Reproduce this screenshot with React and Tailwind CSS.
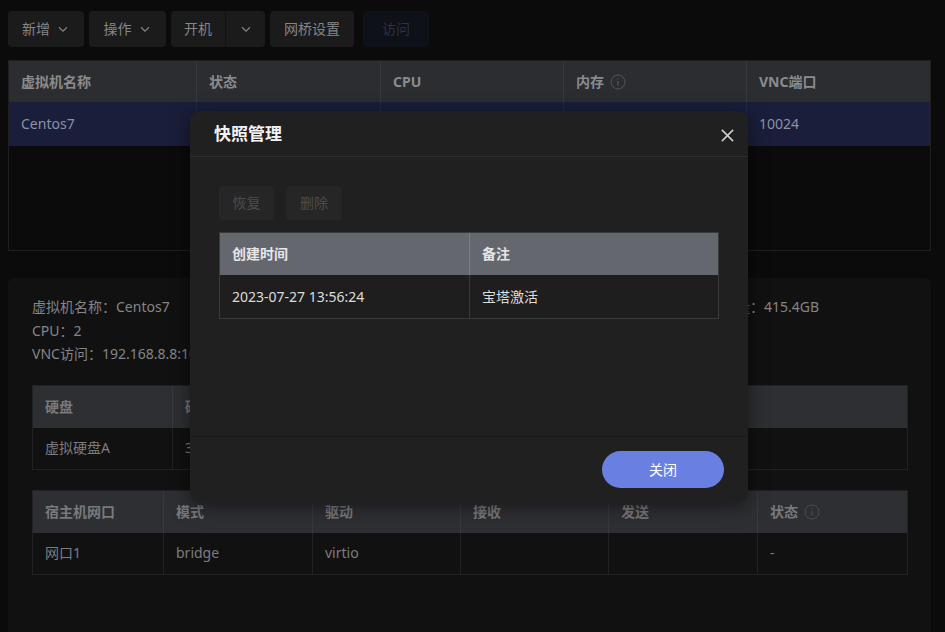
import React from "react";

const font = { fontFamily: '"Noto Sans", "Noto Sans CJK SC", sans-serif' };

function Chevron({ className = "" }) {
  return (
    <svg viewBox="0 0 16 16" className={"w-[14px] h-[14px] " + className} fill="none" stroke="currentColor" strokeWidth="1.3">
      <path d="M3.5 6l4.5 4.5L12.5 6" />
    </svg>
  );
}

function InfoIcon({ className = "" }) {
  return (
    <svg viewBox="0 0 16 16" className={"w-[16px] h-[16px] " + className} fill="none" stroke="currentColor" strokeWidth="1">
      <circle cx="8" cy="8" r="7" />
      <path d="M8 7v4.5" strokeWidth="1.3" />
      <circle cx="8" cy="4.8" r="0.7" fill="currentColor" stroke="none" />
    </svg>
  );
}

function ToolButton({ children, className = "", colors = "bg-[#1b1b1c] text-[#858586]" }) {
  return (
    <button className={"h-9 flex items-center gap-[6px] rounded-[4px] text-sm px-3 " + colors + " " + className}>
      {children}
    </button>
  );
}

function Toolbar() {
  return (
    <div className="flex items-center gap-[5px]">
      <ToolButton className="w-[76px] justify-center">
        新增 <Chevron />
      </ToolButton>
      <ToolButton className="w-[77px] justify-center">
        操作 <Chevron />
      </ToolButton>
      <div className="h-9 flex rounded-[4px] bg-[#1b1b1c] text-[#858586] text-sm">
        <span className="w-[55px] flex items-center justify-center border-r border-[#131313]">开机</span>
        <span className="w-[39px] flex items-center justify-center">
          <Chevron />
        </span>
      </div>
      <ToolButton className="w-[84px] justify-center">网桥设置</ToolButton>
      <ToolButton className="w-[66px] justify-center ml-[4px]" colors="bg-[#0f1119] text-[#2c3040]">
        访问
      </ToolButton>
    </div>
  );
}

function VmTable() {
  const cols = [
    { name: "虚拟机名称", w: "w-[188px]" },
    { name: "状态", w: "w-[184px]" },
    { name: "CPU", w: "w-[183px]" },
    { name: "内存", w: "w-[183px]", info: true },
    { name: "VNC端口", w: "flex-1" },
  ];
  const row = ["Centos7", "", "", "", "10024"];
  return (
    <div className="mt-[13px] border border-[#1f1f20] h-[191px] bg-[#0b0b0c]">
      <div className="flex h-[41px] bg-[#2c2d30] text-[#8b8b8d] text-sm font-bold">
        {cols.map((c, i) => (
          <div key={c.name} className={c.w + " flex items-center gap-[6px] px-3 " + (i < cols.length - 1 ? "border-r border-[#38393c]" : "")}>
            {c.name}
            {c.info && <InfoIcon className="text-[#55565a]" />}
          </div>
        ))}
      </div>
      <div className="flex h-[44px] bg-[#1a1e3a] text-[#8c91a6] text-sm">
        {cols.map((c, i) => (
          <div key={c.name} className={c.w + " flex items-center px-3 " + (i < cols.length - 1 ? "border-r border-[#22264a]" : "")}>
            {row[i]}
          </div>
        ))}
      </div>
    </div>
  );
}

function DetailTable({ cols, row }) {
  return (
    <div className="border border-[#222224] text-sm">
      <div className="flex h-[42px] bg-[#2e2f33] text-[#78797c] font-bold">
        {cols.map((c, i) => (
          <div key={i} className={c.w + " flex items-center gap-[6px] px-3 " + (i < cols.length - 1 ? "border-r border-[#39393d]" : "")}>
            {c.name}
            {c.info && <InfoIcon className="text-[#4a4b4e]" />}
          </div>
        ))}
      </div>
      <div className="flex h-[41px] bg-[#111112] text-[#7d7d7f]">
        {cols.map((c, i) => (
          <div key={i} className={c.w + " flex items-center px-3 " + (i < cols.length - 1 ? "border-r border-[#222224]" : "")}>
            {row[i]}
          </div>
        ))}
      </div>
    </div>
  );
}

function DetailPanel() {
  return (
    <div className="mt-[27px] rounded-[6px] bg-[#111112] pl-6 pr-[23px] pt-[17px] h-[360px]">
      <div className="grid grid-cols-4 text-sm text-[#858587] leading-[23.5px]">
        <div>虚拟机名称：Centos7</div>
        <div></div>
        <div></div>
        <div className="pl-[5px]">磁盘容量：415.4GB</div>
        <div>CPU：2</div>
        <div></div>
        <div></div>
        <div></div>
        <div className="col-span-2">VNC访问：192.168.8.8:10024</div>
      </div>
      <div className="mt-[19px]">
        <DetailTable
          cols={[
            { name: "硬盘", w: "w-[140px]" },
            { name: "硬盘容量", w: "w-[200px]" },
            { name: "格式", w: "w-[200px]" },
            { name: "路径", w: "flex-1" },
          ]}
          row={["虚拟硬盘A", "30GB", "", ""]}
        />
      </div>
      <div className="mt-[20px]">
        <DetailTable
          cols={[
            { name: "宿主机网口", w: "w-[131px]" },
            { name: "模式", w: "w-[149px]" },
            { name: "驱动", w: "w-[148px]" },
            { name: "接收", w: "w-[148px]" },
            { name: "发送", w: "w-[149px]" },
            { name: "状态", w: "flex-1", info: true },
          ]}
          row={["网口1", "bridge", "virtio", "", "", "-"]}
        />
      </div>
    </div>
  );
}

function SnapshotModal() {
  return (
    <div className="absolute left-[190px] top-[111px] w-[558px] h-[391px] rounded-[10px] bg-[#202020] flex flex-col shadow-[0_4px_20px_rgba(0,0,0,0.5)]">
      <div className="h-[46px] flex items-center justify-between pl-6 pr-[13px] border-b border-[#2d2d2d]">
        <span className="text-[17px] font-bold text-[#f2f2f2]">快照管理</span>
        <svg viewBox="0 0 16 16" className="w-[15px] h-[15px] text-[#d0d0d0] mt-[4px]" fill="none" stroke="currentColor" strokeWidth="1.6">
          <path d="M2 2l12 12M14 2L2 14" />
        </svg>
      </div>
      <div className="flex-1 px-[29px] pt-[29px]">
        <div className="flex gap-[12px]">
          <button className="h-[34px] w-[55px] rounded-[4px] bg-[#262626] text-[#4c4c4c] text-sm">恢复</button>
          <button className="h-[34px] w-[56px] rounded-[4px] bg-[#262626] text-[#4c4c4c] text-sm">删除</button>
        </div>
        <div className="mt-[12px] border border-[#3a3a3a] text-sm">
          <div className="flex h-[42px] bg-[#65676f] text-[#e6e6e8] font-bold">
            <div className="w-[250px] flex items-center px-3 border-r border-[#7a7c83]">创建时间</div>
            <div className="flex-1 flex items-center px-3">备注</div>
          </div>
          <div className="flex h-[43px] bg-[#1e1e1e] text-[#dcdcdc]">
            <div className="w-[250px] flex items-center px-3 border-r border-[#3a3a3a]">2023-07-27 13:56:24</div>
            <div className="flex-1 flex items-center px-3">宝塔激活</div>
          </div>
        </div>
      </div>
      <div className="h-[66px] border-t border-[#191919] flex items-start justify-end pr-6 pt-[14px]">
        <button className="h-[37px] w-[122px] rounded-full bg-[#6a7fe2] text-white text-sm">关闭</button>
      </div>
    </div>
  );
}

export default function App() {
  return (
    <div className="relative h-[632px] overflow-hidden bg-[#0b0b0c] px-2 pt-[11px] w-[945px]" style={font}>
      <div className="w-[923px]">
        <Toolbar />
        <VmTable />
        <DetailPanel />
      </div>
      <SnapshotModal />
    </div>
  );
}
